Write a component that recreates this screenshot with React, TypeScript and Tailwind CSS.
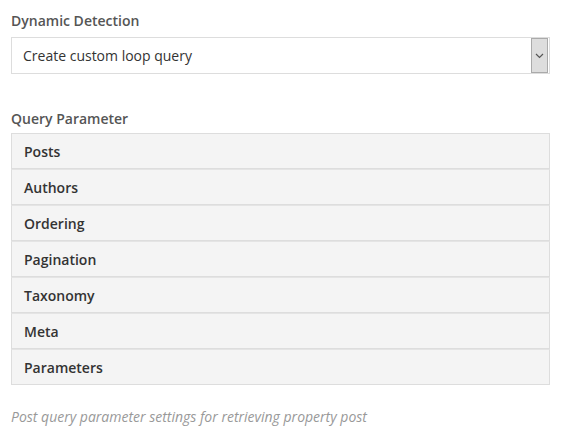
import React from 'react';

const items = ['Posts', 'Authors', 'Ordering', 'Pagination', 'Taxonomy', 'Meta', 'Parameters'];

export default function App() {
  return (
    <div className="w-[565px] h-[440px] bg-white pl-[11px] pr-[15px] pt-[11px] text-[14px]" style={{ fontFamily: '"Open Sans", sans-serif' }}>
      <div className="font-semibold text-[#555] leading-[20px]">Dynamic Detection</div>
      <div className="mt-[6px] flex h-[37px] items-center justify-between border border-[#ddd] bg-white pl-[11px] pr-[1px]">
        <span className="text-[#333]">Create custom loop query</span>
        <div className="flex h-[35px] w-[17px] items-center justify-center border border-[#aaa] bg-[#ddd]">
          <svg width="9" height="6" viewBox="0 0 9 6" fill="none">
            <path d="M1 1l3.5 3.5L8 1" stroke="#555" strokeWidth="1.2" />
          </svg>
        </div>
      </div>

      <div className="mt-[35px] font-semibold text-[#555] leading-[20px]">Query Parameter</div>
      <div className="mt-[4px] flex flex-col">
        {items.map((item, i) => (
          <div
            key={item}
            className={`flex h-[36px] items-center border-x border-b border-[#ddd] bg-[#f4f4f4] pl-[12px] font-semibold text-[#333] ${i === 0 ? 'border-t' : 'border-t-[1px] border-t-[#e4e4e4]'}`}
          >
            {item}
          </div>
        ))}
      </div>

      <div className="mt-[21px] italic text-[#999]">Post query parameter settings for retrieving property post</div>
    </div>
  );
}
